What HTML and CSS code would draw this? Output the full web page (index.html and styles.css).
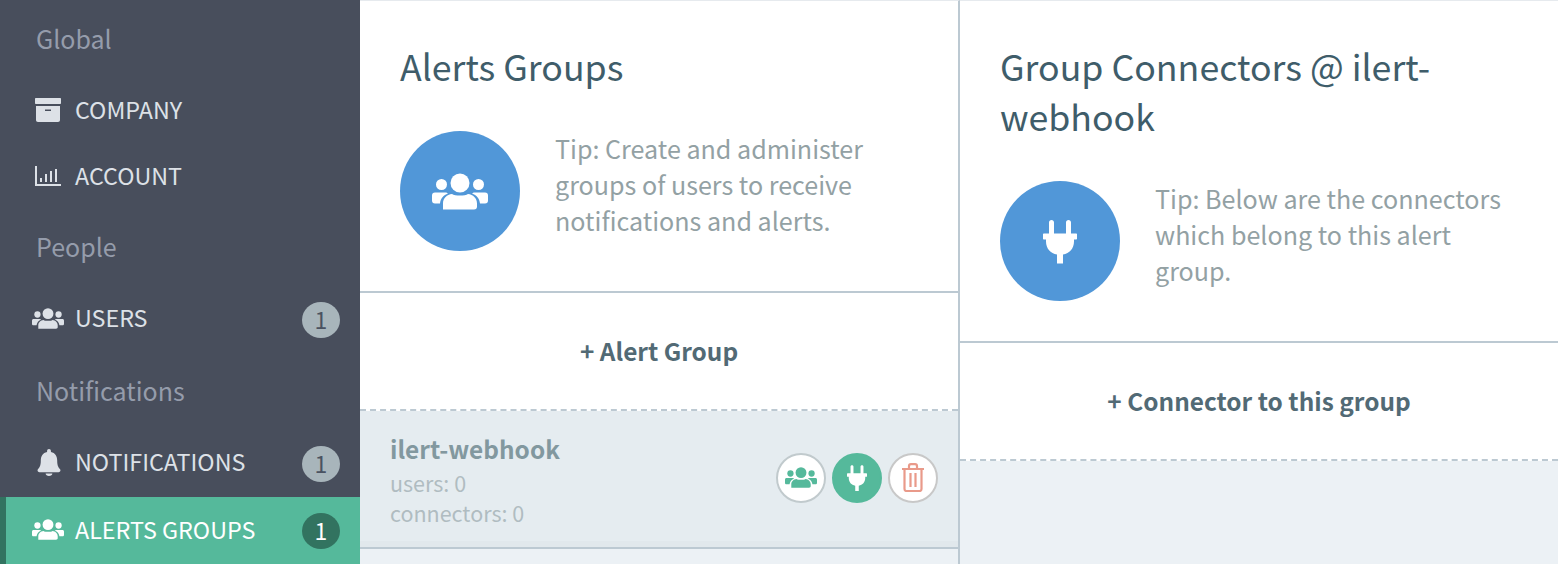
FILE: index.html
```html
<!DOCTYPE html>
<html lang="en">
<head>
<meta charset="utf-8">
<title>Alerts Groups</title>
<link rel="stylesheet" href="styles.css">
</head>
<body>
<svg class="defs" width="0" height="0" aria-hidden="true">
  <symbol id="i-users" viewBox="0 0 56 36">
    <circle cx="28" cy="9.5" r="9.5"/>
    <circle cx="9.5" cy="11" r="5.5"/>
    <circle cx="46.5" cy="11" r="5.5"/>
    <path d="M11 36V30C11 24.5 15 21 20 20.5C23 22.5 33 22.5 36 20.5C41 21 45 24.5 45 30V33C45 35 44 36 42 36Z"/>
    <path d="M3 19H13C14.500 19 15.500 19.500 16 20C11.500 21.500 8.500 25 8 30H3C1 30 0 29 0 27V22C0 20 1 19 3 19Z"/>
    <path d="M53 19H43C41.500 19 40.500 19.500 40 20C44.500 21.500 47.500 25 48 30H53C55 30 56 29 56 27V22C56 20 55 19 53 19Z"/>
  </symbol>
  <symbol id="i-plug" viewBox="0 0 34 44">
    <path d="M6 16V3C6 1.500 7 .5 8.500 .5S11 1.500 11 3V16ZM23 16V3C23 1.500 24 .5 25.500 .5S28 1.500 28 3V16Z"/>
    <path d="M1 14H33C33.600 14 34 14.400 34 15V19C34 19.600 33.600 20 33 20H31V22C31 29 26.500 34 20 35V44H14V35C7.500 34 3 29 3 22V20H1C.4 20 0 19.600 0 19V15C0 14.400 .4 14 1 14Z"/>
  </symbol>
</svg>

<div class="app">
  <nav class="sidebar">
    <div class="heading">Global</div>
    <a class="item plain">
      <svg class="nav-icon" viewBox="0 0 26 24"><path d="M1 0H25C25.600 0 26 .4 26 1V5C26 5.600 25.600 6 25 6H1C.4 6 0 5.600 0 5V1C0 .4 .4 0 1 0ZM1 8H25V22C25 23.200 24.200 24 23 24H3C1.800 24 1 23.200 1 22ZM10 11.500V13H16V11.500Z" fill-rule="evenodd"/></svg>
      <span class="label">COMPANY</span>
    </a>
    <a class="item plain">
      <svg class="nav-icon" viewBox="0 0 26 20"><path d="M0 0H2V18H26V20H0ZM5 12H7V16H5ZM10 8H12V16H10ZM15 5H17V16H15ZM20 3H22V16H20Z"/></svg>
      <span class="label">ACCOUNT</span>
    </a>
    <div class="heading">People</div>
    <a class="item">
      <svg class="nav-icon users"><use href="#i-users"/></svg>
      <span class="label">USERS</span>
      <span class="badge">1</span>
    </a>
    <div class="heading">Notifications</div>
    <a class="item">
      <svg class="nav-icon bell" viewBox="0 0 24 28"><path d="M12 0C13.200 0 14 .9 14 2V3.200C18.500 4.100 20.500 7.500 20.500 12C20.500 17 21.500 19 23.500 21C24.300 21.900 24 24 22 24H2C0 24 -.3 21.900 .5 21C2.500 19 3.500 17 3.500 12C3.500 7.500 5.500 4.100 10 3.200V2C10 .9 10.800 0 12 0ZM8.500 25.500H15.500C15.500 27 14 28 12 28S8.500 27 8.500 25.500Z"/></svg>
      <span class="label">NOTIFICATIONS</span>
      <span class="badge">1</span>
    </a>
    <a class="item active">
      <svg class="nav-icon users"><use href="#i-users"/></svg>
      <span class="label">ALERTS GROUPS</span>
      <span class="badge">1</span>
    </a>
  </nav>

  <section class="panel">
    <header class="intro">
      <h2 class="title">Alerts Groups</h2>
      <div class="tip">
        <div class="tip-circle"><svg class="tip-users"><use href="#i-users"/></svg></div>
        <p class="tip-text">Tip: Create and administer groups of users to receive notifications and alerts.</p>
      </div>
    </header>
    <div class="add">+ Alert Group</div>
    <div class="group">
      <div class="group-info">
        <div class="group-name">ilert-webhook</div>
        <div class="group-meta">users: 0</div>
        <div class="group-meta">connectors: 0</div>
      </div>
      <div class="actions">
        <button class="act"><svg class="act-users"><use href="#i-users"/></svg></button>
        <button class="act act-on"><svg class="act-plug"><use href="#i-plug"/></svg></button>
        <button class="act act-del">
          <svg class="act-trash" viewBox="0 0 22 29"><path d="M0 6H22M7 6V3C7 1.800 7.800 1.200 9 1.200H13C14.200 1.200 15 1.800 15 3V6M2.500 6V26C2.500 27.200 3.300 28 4.500 28H17.500C18.700 28 19.500 27.200 19.500 26V6M8.500 10V24M13.500 10V24"/></svg>
        </button>
      </div>
    </div>
  </section>

  <section class="panel">
    <header class="intro">
      <h2 class="title">Group Connectors @ ilert-webhook</h2>
      <div class="tip">
        <div class="tip-circle"><svg class="tip-plug"><use href="#i-plug"/></svg></div>
        <p class="tip-text">Tip: Below are the connectors which belong to this alert group.</p>
      </div>
    </header>
    <div class="add">+ Connector to this group</div>
  </section>
</div>
</body>
</html>
```
FILE: styles.css
```css
* { box-sizing: border-box; }
html, body { margin: 0; height: 100%; }
body {
  font-family: "Noto Sans CJK SC", "Noto Sans", sans-serif;
  overflow: hidden;
  background: #fff;
}
.defs { position: absolute; }
.app { display: flex; height: 564px; }

.sidebar { width: 360px; flex: none; background: #484e5c; }
.heading {
  height: 77px;
  padding: 0 0 3px 36px;
  display: flex;
  align-items: center;
  font-size: 25px;
  color: #959cab;
}
.heading:first-child { padding-bottom: 1px; }
.item {
  height: 67px;
  display: flex;
  align-items: center;
  padding: 0 20px 0 32px;
  color: #dde1e7;
  fill: #dde1e7;
}
.item.plain { height: 66px; }
.label { font-size: 23.300px; margin-left: 14px; padding-bottom: 6px; flex: 1; }
.item.plain .label { padding-bottom: 2px; }
.item.active .label { padding-bottom: 4px; }
.nav-icon { width: 26px; height: 24px; flex: none; margin-left: 3px; }
.nav-icon.users { width: 32px; height: 23px; margin-left: 0; margin-right: -3px; margin-bottom: 3px; }
.nav-icon.bell { width: 24px; height: 27px; margin-left: 5px; margin-right: 0; margin-bottom: 2px; }
.badge {
  width: 38px;
  height: 36px;
  padding-bottom: 1px;
  border-radius: 50%;
  background: #a8b5bb;
  color: #4a5261;
  font-size: 23px;
  display: flex;
  align-items: center;
  justify-content: center;
}
.item.active {
  background: #55b99b;
  border-left: 6px solid #327360;
  padding-left: 26px;
  color: #fff;
  fill: #fff;
}
.item.active .badge { background: #327360; color: #fff; }

.panel {
  width: 600px;
  flex: none;
  background: #ecf1f5;
  border-right: 2px solid #bcc9d2;
  border-top: 1px solid #e6eaee;
}
.panel:last-child { border-right: 0; flex: 1; }

.intro {
  background: #fff;
  padding: 40px 40px 40px;
  border-bottom: 2px solid #bcc9d2;
}
.title {
  margin: 0;
  font-size: 35.700px;
  line-height: 50px;
  font-weight: 400;
  color: #3f5d6a;
}
.tip { display: flex; align-items: center; margin-top: 40px; }
.tip-circle {
  width: 120px;
  height: 120px;
  flex: none;
  border-radius: 50%;
  background: #5197d8;
  fill: #fff;
  display: flex;
  align-items: center;
  justify-content: center;
}
.tip-users { width: 56px; height: 39px; }
.tip-plug { width: 34px; height: 45px; }
.tip-text {
  margin: -2px 0 0 35px;
  padding-bottom: 12px;
  font-size: 25.100px;
  line-height: 36px;
  color: #93a1a4;
}

.add {
  height: 118px;
  padding-bottom: 2px;
  background: #fff;
  border-bottom: 2px dashed #bcc9d2;
  display: flex;
  align-items: center;
  justify-content: center;
  font-size: 24.400px;
  font-weight: 700;
  color: #526a75;
}

.group {
  height: 138px;
  padding: 0 20px 1px 30px;
  background: #e5ecf0;
  border-bottom: 2px solid #bcc9d2;
  box-shadow: inset 0 -6px 0 #e1e8ec;
  display: flex;
  align-items: center;
  justify-content: space-between;
}
.group-name {
  font-size: 24.400px;
  line-height: 38px;
  font-weight: 700;
  color: #82989f;
}
.group-meta {
  font-size: 21.500px;
  line-height: 29.500px;
  color: #b0bcc1;
}
.actions { display: flex; gap: 6px; padding-bottom: 2px; }
.act {
  width: 50px;
  height: 50px;
  padding: 0;
  border-radius: 50%;
  border: 2px solid #c1cacd;
  background: #fff;
  fill: #55b99b;
  display: flex;
  align-items: center;
  justify-content: center;
}
.act-on { background: #55b99b; border-color: #55b99b; fill: #fff; }
.act-del { border-color: #c8c8c8; }
.act-users { width: 32px; height: 23px; }
.act-plug { width: 20px; height: 26px; }
.act-trash {
  width: 22px;
  height: 29px;
  fill: none;
  stroke: #e99a8a;
  stroke-width: 2.200;
}
```
